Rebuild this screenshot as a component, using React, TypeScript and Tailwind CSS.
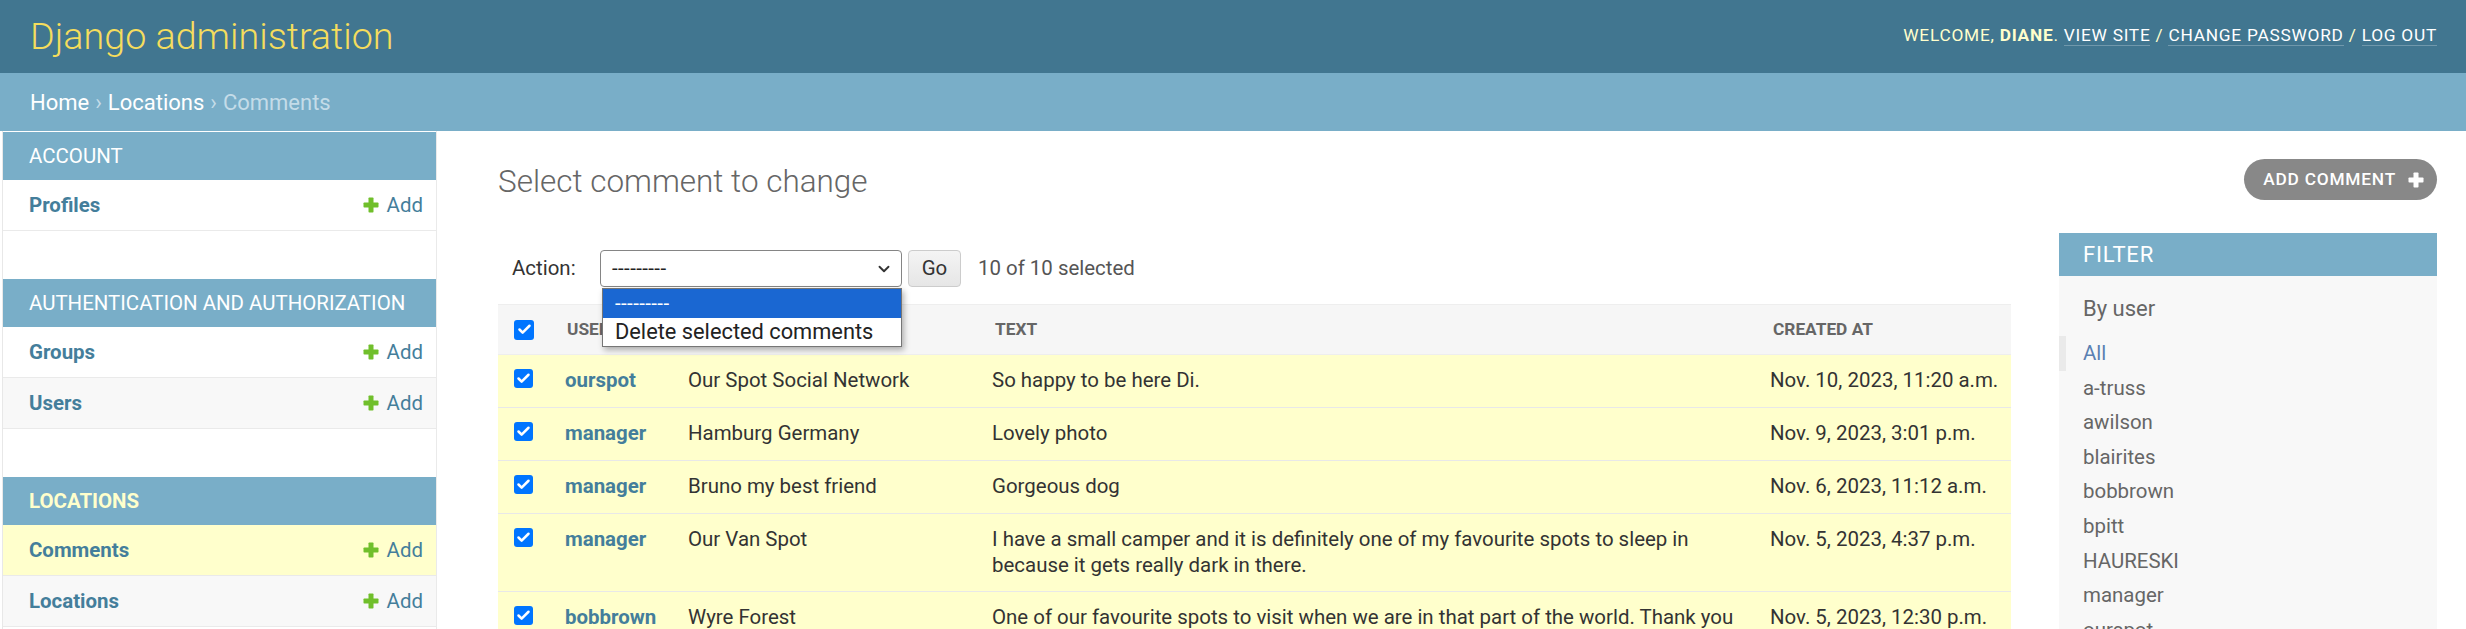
import { Check, ChevronDown } from 'lucide-react';

const PlusIcon = ({ className }: { className?: string }) => (
  <svg viewBox="0 0 16 16" className={className} fill="currentColor">
    <rect x="5.5" y="0.5" width="5" height="15" rx="0.8" />
    <rect x="0.5" y="5.5" width="15" height="5" rx="0.8" />
  </svg>
);

const Checkbox = ({ size = 'w-[19px] h-[19px]' }: { size?: string }) => (
  <div className={`${size} rounded-[3px] bg-[#0075ff] flex items-center justify-center`}>
    <Check className="w-[15px] h-[15px] text-white" strokeWidth={4} />
  </div>
);

const modules = [
  { name: 'Account', current: false, models: [{ name: 'Profiles', current: false }] },
  {
    name: 'Authentication and Authorization',
    current: false,
    models: [
      { name: 'Groups', current: false },
      { name: 'Users', current: false },
    ],
  },
  {
    name: 'Locations',
    current: true,
    models: [
      { name: 'Comments', current: true },
      { name: 'Locations', current: false },
    ],
  },
];

const comments = [
  { user: 'ourspot', location: 'Our Spot Social Network', text: 'So happy to be here Di.', created: 'Nov. 10, 2023, 11:20 a.m.' },
  { user: 'manager', location: 'Hamburg Germany', text: 'Lovely photo', created: 'Nov. 9, 2023, 3:01 p.m.' },
  { user: 'manager', location: 'Bruno my best friend', text: 'Gorgeous dog', created: 'Nov. 6, 2023, 11:12 a.m.' },
  {
    user: 'manager',
    location: 'Our Van Spot',
    text: 'I have a small camper and it is definitely one of my favourite spots to sleep in because it gets really dark in there.',
    created: 'Nov. 5, 2023, 4:37 p.m.',
  },
  {
    user: 'bobbrown',
    location: 'Wyre Forest',
    text: 'One of our favourite spots to visit when we are in that part of the world. Thank you for sharing.',
    created: 'Nov. 5, 2023, 12:30 p.m.',
  },
];

const users = ['a-truss', 'awilson', 'blairites', 'bobbrown', 'bpitt', 'HAURESKI', 'manager', 'ourspot', 'teamspot'];

export default function App() {
  return (
    <div className="h-[629px] overflow-hidden bg-white font-['Roboto','Lucida_Grande','DejaVu_Sans',sans-serif] text-[#333]">
      {/* Header */}
      <div className="h-[73px] bg-[#417690] flex items-center justify-between pl-[30px] pr-[29px]">
        <div className="text-[37.7px] font-light text-[#f5dd5d] leading-none">Django administration</div>
        <div className="text-[17.3px] uppercase tracking-[0.75px] text-[#ffc] -mt-[2px]">
          Welcome, <strong className="font-bold">Diane</strong>.{' '}
          <span className="text-white border-b border-white/25">View site</span> /{' '}
          <span className="text-white border-b border-white/25">Change password</span> /{' '}
          <span className="text-white border-b border-white/25">Log out</span>
        </div>
      </div>

      {/* Breadcrumbs */}
      <div className="h-[58px] bg-[#79aec8] flex items-center pl-[30px] text-[22px] text-[#c4dce8]">
        <span className="text-white">Home</span>
        <span className="mx-[6px]">›</span>
        <span className="text-white">Locations</span>
        <span className="mx-[6px]">›</span>
        <span>Comments</span>
      </div>

      <div className="flex">
        {/* Sidebar */}
        <div className="flex shrink-0">
          <div className="w-[2px]" />
          <div className="w-px bg-[#e8e8e8]" />
          <div className="w-[434px] pt-px border-r border-[#eaeaea] flex flex-col gap-[48px]">
            {modules.map((m) => (
              <div key={m.name}>
                <div
                  className={`h-[48px] bg-[#79aec8] flex items-center pl-[26px] text-[20.45px] uppercase ${
                    m.current ? 'text-[#ffc] font-bold' : 'text-white'
                  }`}
                >
                  {m.name}
                </div>
                {m.models.map((model, i) => (
                  <div
                    key={model.name}
                    className={`h-[51px] flex items-center justify-between pl-[26px] pr-[13px] border-b border-[#eaeaea] ${
                      model.current ? 'bg-[#ffc]' : i % 2 === 1 ? 'bg-[#f8f8f8]' : 'bg-white'
                    }`}
                  >
                    <span className="text-[20.45px] font-bold text-[#447e9b]">{model.name}</span>
                    <span className="flex items-center gap-[8px] text-[20.45px] text-[#447e9b]">
                      <PlusIcon className="w-[16px] h-[16px] text-[#70bf2b]" />
                      Add
                    </span>
                  </div>
                ))}
              </div>
            ))}
          </div>
        </div>

        {/* Content */}
        <div className="flex-1 pl-[61px] pr-[29px]">
          <div className="flex items-start justify-between pt-[28px]">
            <h1 className="mt-[4px] text-[31.45px] leading-[38px] font-light text-[#666]">Select comment to change</h1>
            <div className="h-[41px] rounded-full bg-[#888] flex items-center pl-[19px] pr-[13px] gap-[12px] text-white text-[17.3px] uppercase tracking-[0.8px] font-medium">
              Add comment
              <PlusIcon className="w-[16px] h-[16px] text-white" />
            </div>
          </div>

          <div className="flex justify-between mt-[32px]">
            {/* Changelist */}
            <div className="w-[1513px] pt-[17px]">
              <div className="relative flex items-center pl-[14px] text-[20.45px]">
                <span className="text-[#333] w-[88px]">Action:</span>
                <div className="relative">
                  <div className="w-[302px] h-[37px] rounded-[4px] border border-[#858585] flex items-center justify-between pl-[11px] pr-[8px] bg-white">
                    <span className="text-[20.45px] tracking-[0.4px] text-[#222]">---------</span>
                    <ChevronDown className="w-[18px] h-[18px] text-[#333]" strokeWidth={2.5} />
                  </div>
                  {/* Open dropdown */}
                  <div className="absolute left-[2px] top-[38px] w-[300px] bg-white border border-[#767676] shadow-[2px_3px_6px_rgba(0,0,0,0.3)] z-10">
                    <div className="h-[29px] bg-[#1a67d2] text-white flex items-center pl-[12px] text-[20.45px] tracking-[0.4px]">
                      ---------
                    </div>
                    <div className="h-[28px] flex items-center pl-[12px] text-[21.8px] text-[#222]">
                      Delete selected comments
                    </div>
                  </div>
                </div>
                <div className="ml-[6px] w-[53px] h-[37px] rounded-[4px] border border-[#ccc] bg-gradient-to-b from-[#f4f4f4] to-[#e6e6e6] flex items-center justify-center text-[#333]">
                  Go
                </div>
                <span className="ml-[17px] text-[#555]">10 of 10 selected</span>
              </div>

              {/* Table */}
              <div className="mt-[17px]">
                <div className="grid grid-cols-[56px_122px_304px_778px_253px] h-[51px] items-center bg-[#f6f6f6] border-y border-[#eee] text-[17.3px] font-bold uppercase text-[#666]">
                  <div className="pl-[16px]">
                    <Checkbox size="w-[20px] h-[20px]" />
                  </div>
                  <div className="pl-[13px]">User</div>
                  <div className="pl-[14px]">Location</div>
                  <div className="pl-[15px]">Text</div>
                  <div className="pl-[15px]">Created at</div>
                </div>
                {comments.map((c, i) => (
                  <div
                    key={i}
                    className="grid grid-cols-[56px_122px_304px_778px_253px] min-h-[53px] bg-[#ffc] border-b border-[#e8e8e8] text-[20.45px] leading-[25.5px]"
                  >
                    <div className="pl-[16px] pt-[14px]">
                      <Checkbox />
                    </div>
                    <div className="pl-[11px] py-[13px] font-bold text-[#447e9b]">{c.user}</div>
                    <div className="pl-[12px] py-[13px]">{c.location}</div>
                    <div className="pl-[12px] pr-[12px] py-[13px]">{c.text}</div>
                    <div className="pl-[12px] py-[13px]">{c.created}</div>
                  </div>
                ))}
              </div>
            </div>

            {/* Filter */}
            <div className="w-[378px]">
              <div className="h-[43px] bg-[#79aec8] flex items-center pl-[24px] text-[22px] uppercase tracking-[0.8px] text-white">
                Filter
              </div>
              <div className="bg-[#f8f8f8] pb-[20px]">
                <h3 className="pt-[20px] pl-[24px] text-[22px] leading-[25px] text-[#666]">By user</h3>
                <ul className="mt-[15px] text-[20.45px] leading-[34.6px]">
                  <li className="border-l-[7px] border-[#eaeaea] pl-[17px] text-[#5b80b2]">All</li>
                  {users.map((u) => (
                    <li key={u} className="pl-[24px] text-[#666]">
                      {u}
                    </li>
                  ))}
                </ul>
              </div>
            </div>
          </div>
        </div>
      </div>
    </div>
  );
}
